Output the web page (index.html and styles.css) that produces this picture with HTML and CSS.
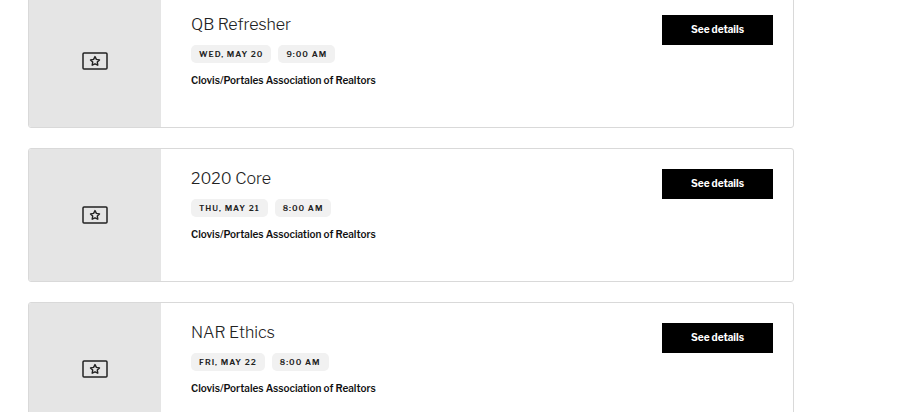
FILE: index.html
```html
<!DOCTYPE html>
<html lang="en">
<head>
    <meta charset="UTF-8">
    <meta name="viewport" content="width=device-width, initial-scale=1.0">
    <title>Events</title>
    <link rel="stylesheet" href="styles.css">
</head>
<body>
<svg class="sprite" aria-hidden="true">
    <symbol id="ticket" viewBox="0 0 26 18">
        <rect x="1" y="1" width="24" height="16" rx="1" fill="none" stroke="#222" stroke-width="1.5"/>
        <path d="M13 4.6l1.4 2.8 3.1.5-2.2 2.2.5 3.1-2.8-1.4-2.8 1.4.5-3.1-2.2-2.2 3.1-.5z" fill="none" stroke="#222" stroke-width="1.4" stroke-linejoin="round"/>
    </symbol>
</svg>
<main class="events">
    <article class="event">
        <div class="event-thumb"><svg class="event-icon" aria-hidden="true"><use href="#ticket"/></svg></div>
        <div class="event-info">
            <h2 class="event-title">QB Refresher</h2>
            <div class="event-tags">
                <span class="tag">Wed, May 20</span>
                <span class="tag">9:00 AM</span>
            </div>
            <p class="event-host">Clovis/Portales Association of Realtors</p>
        </div>
        <a class="event-link" href="#">See details</a>
    </article>
    <article class="event">
        <div class="event-thumb"><svg class="event-icon" aria-hidden="true"><use href="#ticket"/></svg></div>
        <div class="event-info">
            <h2 class="event-title">2020 Core</h2>
            <div class="event-tags">
                <span class="tag">Thu, May 21</span>
                <span class="tag">8:00 AM</span>
            </div>
            <p class="event-host">Clovis/Portales Association of Realtors</p>
        </div>
        <a class="event-link" href="#">See details</a>
    </article>
    <article class="event">
        <div class="event-thumb"><svg class="event-icon" aria-hidden="true"><use href="#ticket"/></svg></div>
        <div class="event-info">
            <h2 class="event-title">NAR Ethics</h2>
            <div class="event-tags">
                <span class="tag">Fri, May 22</span>
                <span class="tag">8:00 AM</span>
            </div>
            <p class="event-host">Clovis/Portales Association of Realtors</p>
        </div>
        <a class="event-link" href="#">See details</a>
    </article>
</main>
</body>
</html>
```
FILE: styles.css
```css
* {
    box-sizing: border-box;
}
html {
    height: 100%;
    overflow: hidden;
}
body {
    margin: 0;
    height: 100%;
    overflow: hidden;
    background: #fff;
    color: #222;
    font-family: "Libre Franklin", Inter, "Liberation Sans", sans-serif;
}
.sprite {
    display: none;
}
.events {
    display: flex;
    flex-direction: column;
    gap: 20px;
    margin: -6px 105px 0 28px;
}
.event {
    display: flex;
    min-height: 134px;
    border: 1px solid #d9d9d9;
    border-radius: 3px;
    overflow: hidden;
}
.event-thumb {
    display: flex;
    flex: none;
    align-items: center;
    justify-content: center;
    width: 132px;
    background: #e5e5e5;
}
.event-icon {
    width: 26px;
    height: 18px;
}
.event-info {
    flex: 1;
    padding: 20px 20px 20px 30px;
}
.event-title {
    margin: 0 0 10px;
    font-size: 16px;
    font-weight: 300;
    line-height: 20px;
}
.event-tags {
    display: flex;
    gap: 7px;
}
.tag {
    padding: 0 8px;
    border-radius: 5px;
    background: #f1f1f1;
    font-size: 8px;
    font-weight: 600;
    line-height: 18px;
    letter-spacing: 1px;
    text-transform: uppercase;
}
.event-host {
    margin: 10px 0 0;
    color: #111;
    font-size: 10px;
    font-weight: 600;
    line-height: 14px;
}
.event-link {
    flex: none;
    align-self: flex-start;
    width: 111px;
    margin: 20px 20px 0 0;
    padding-bottom: 1px;
    background: #000;
    color: #fff;
    font-size: 10px;
    font-weight: 700;
    line-height: 29px;
    text-align: center;
    text-decoration: none;
}
```
